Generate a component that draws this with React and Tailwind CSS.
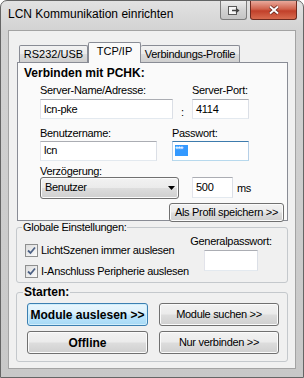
import React from 'react';

const btnGray =
  'flex items-center justify-center rounded-[3px] border border-[#707070] bg-[linear-gradient(to_bottom,#f2f2f2_0%,#ebebeb_48%,#dddddd_52%,#cfcfcf_100%)] shadow-[inset_0_0_0_1px_#fbfbfb]';
const btnBlue =
  'flex items-center justify-center rounded-[3px] border border-[#3c7fb1] bg-[linear-gradient(to_bottom,#eaf6fd_0%,#d9f0fc_48%,#bee6fd_52%,#a7d9f5_100%)] shadow-[inset_0_0_0_1px_#cfeefc]';
const textbox =
  'flex items-center bg-white border border-t-[#abadb3] border-l-[#e2e3ea] border-r-[#dbdfe6] border-b-[#e3e9ef] pl-[3px]';

function Check({ label }) {
  return (
    <div className="flex items-center h-[13px] whitespace-nowrap">
      <span className="shrink-0 w-[13px] h-[13px] border border-[#8e8f8f] bg-[linear-gradient(135deg,#dcdcdc,#fbfbfb)] flex items-center justify-center">
        <svg width="9" height="9" viewBox="0 0 9 9">
          <path d="M1 4.5 L3.5 7 L8 1.5" fill="none" stroke="#4d6185" strokeWidth="1.8" />
        </svg>
      </span>
      <span className="ml-[3px] leading-[13px]">{label}</span>
    </div>
  );
}

export default function App() {
  return (
    <div className="w-[304px] h-[378px] bg-white font-['Liberation_Sans',Arial,sans-serif] text-[11px] tracking-[-0.3px] text-black">
      <div className="w-[304px] h-[378px] rounded-t-[7px] border border-[#656565] bg-[linear-gradient(to_bottom,#e2e2e2_0px,#d2d2d2_30px,#c8c8c8_100%)] flex flex-col">
        {/* title bar */}
        <div className="flex h-[29px] items-start">
          <div className="pl-[7px] pt-[6px] text-[12px] leading-[15px] tracking-normal">LCN Kommunikation einrichten</div>
          <div className="ml-auto mr-[6px] flex gap-[3px]">
            <div className="w-[27px] h-[19px] rounded-b-[3px] border border-t-0 border-[#7d7d7d] bg-[linear-gradient(to_bottom,#ededed,#d2d2d2_50%,#c4c4c4)] flex items-center justify-center">
              <svg width="13" height="11" viewBox="0 0 13 11">
                <rect x="1.5" y="1.5" width="8" height="8" fill="#f6f6f6" stroke="#5a5a5a" />
                <path d="M5 5.5 H11 M9 3.5 L11.5 5.5 L9 7.5" fill="none" stroke="#444" strokeWidth="1.3" />
              </svg>
            </div>
            <div className="w-[47px] h-[19px] rounded-b-[3px] border border-t-0 border-[#6e2b20] bg-[linear-gradient(to_bottom,#e9a99b,#d0624c_45%,#c1402a_55%,#d86b4f)] flex items-center justify-center">
              <svg width="12" height="10" viewBox="0 0 12 10">
                <path d="M2 1.5 L10 8.5 M10 1.5 L2 8.5" stroke="#5b2118" strokeWidth="3.4" />
                <path d="M2 1.5 L10 8.5 M10 1.5 L2 8.5" stroke="#fff" strokeWidth="2" />
              </svg>
            </div>
          </div>
        </div>

        {/* client area */}
        <div className="ml-[7px] w-[288px] h-[339px] border border-[#a3a3a3] bg-[#f0f0f0] pl-[7px] pt-[11px]">
          {/* tabs */}
          <div className="flex items-end h-[20px] ml-[3px]">
            <div className="w-[69px] h-[17px] border border-b-0 border-[#898c95] rounded-t-[2px] bg-[linear-gradient(to_bottom,#f2f2f2,#ebebeb_50%,#dddddd_50%,#cfcfcf)] flex items-center justify-center tracking-normal">RS232/USB</div>
            <div className="relative z-10 w-[53px] h-[21px] -mb-px border border-b-0 border-[#898c95] rounded-t-[2px] bg-[#fafafa] flex justify-center pt-[2px] leading-[13px] tracking-normal">TCP/IP</div>
            <div className="w-[99px] h-[17px] border border-b-0 border-l-0 border-[#898c95] rounded-t-[2px] bg-[linear-gradient(to_bottom,#f2f2f2,#ebebeb_50%,#dddddd_50%,#cfcfcf)] flex items-center justify-center">Verbindungs-Profile</div>
          </div>

          {/* tab panel */}
          <div className="ml-[1px] w-[271px] h-[159px] border border-[#898c95] bg-[#fafafa]">
            <div className="pt-[3px] pl-[6px] font-bold text-[12px] leading-[14px] tracking-normal">Verbinden mit PCHK:</div>
            <div className="pl-[22px]">
              <div className="flex mt-[4px] leading-[13px]">
                <span className="w-[152px]">Server-Name/Adresse:</span>
                <span>Server-Port:</span>
              </div>
              <div className="flex mt-[1px] items-center">
                <div className={`${textbox} w-[133px] h-[20px]`}>lcn-pke</div>
                <span className="w-[19px] text-center pt-[6px]">:</span>
                <div className={`${textbox} w-[57px] h-[20px]`}>4114</div>
              </div>
              <div className="flex mt-[6px] leading-[13px]">
                <span className="w-[132px]">Benutzername:</span>
                <span>Passwort:</span>
              </div>
              <div className="flex mt-[1px] gap-[15px]">
                <div className={`${textbox} w-[117px] h-[20px]`}>lcn</div>
                <div className="flex items-center w-[77px] h-[20px] bg-white border border-t-[#3d7bad] border-l-[#b5cfe7] border-r-[#b5cfe7] border-b-[#b7d9ed] pl-[2px]">
                  <span className="w-[13px] h-[11px] bg-[#3399ff] text-white text-[9px] leading-[8px] tracking-[-1px] overflow-hidden">***</span>
                </div>
              </div>
              <div className="mt-[4px] leading-[13px]">Verzögerung:</div>
              <div className="flex items-center -mt-px">
                <div className="w-[139px] h-[22px] rounded-[3px] border border-[#707070] bg-[linear-gradient(to_bottom,#f2f2f2_0%,#ebebeb_48%,#dddddd_52%,#cfcfcf_100%)] shadow-[inset_0_0_0_1px_#fbfbfb] flex items-center pl-[4px] pr-[3px]">
                  <span className="flex-1">Benutzer</span>
                  <svg width="7" height="4" viewBox="0 0 7 4">
                    <path d="M0 0 H7 L3.5 4 Z" fill="#000" />
                  </svg>
                </div>
                <div className={`${textbox} ml-[13px] w-[41px] h-[21px]`}>500</div>
                <span className="ml-[4px] pt-[2px]">ms</span>
              </div>
            </div>
            <div className="flex justify-end pr-[3px] mt-[4px]">
              <div className={`${btnGray} w-[115px] h-[19px]`}>Als Profil speichern &gt;&gt;</div>
            </div>
          </div>

          {/* global settings */}
          <fieldset className="w-[272px] h-[62px] border border-[#c4c8cc] rounded-[3px] flex">
            <legend className="ml-[5px] px-[1px] leading-[13px]">Globale Einstellungen:</legend>
            <div className="flex w-full">
              <div className="flex-1 pl-[8px] pt-[10px] flex flex-col gap-[8px]">
                <Check label="LichtSzenen immer auslesen" />
                <Check label="I-Anschluss Peripherie auslesen" />
              </div>
              <div className="shrink-0 w-[84px] mr-[14px] flex flex-col items-center pt-[1px]">
                <span className="leading-[13px] whitespace-nowrap">Generalpasswort:</span>
                <div className={`${textbox} mt-[2px] w-[54px] h-[21px]`}></div>
              </div>
            </div>
          </fieldset>

          {/* start */}
          <fieldset className="mt-[2px] w-[272px] h-[77px] border border-[#c4c8cc] rounded-[3px]">
            <legend className="ml-[6px] px-[1px] font-bold text-[12px] leading-[14px] tracking-normal">Starten:</legend>
            <div className="pl-[10px] pt-[4px] grid grid-cols-[121px_120px] gap-x-[11px] gap-y-[5px]">
              <div className={`${btnBlue} h-[23px] font-bold text-[12px] tracking-normal`}>Module auslesen &gt;&gt;</div>
              <div className={`${btnGray} h-[23px]`}>Module suchen &gt;&gt;</div>
              <div className={`${btnGray} h-[23px] font-bold text-[12px] tracking-normal`}>Offline</div>
              <div className={`${btnGray} h-[23px]`}>Nur verbinden &gt;&gt;</div>
            </div>
          </fieldset>
        </div>
      </div>
    </div>
  );
}
